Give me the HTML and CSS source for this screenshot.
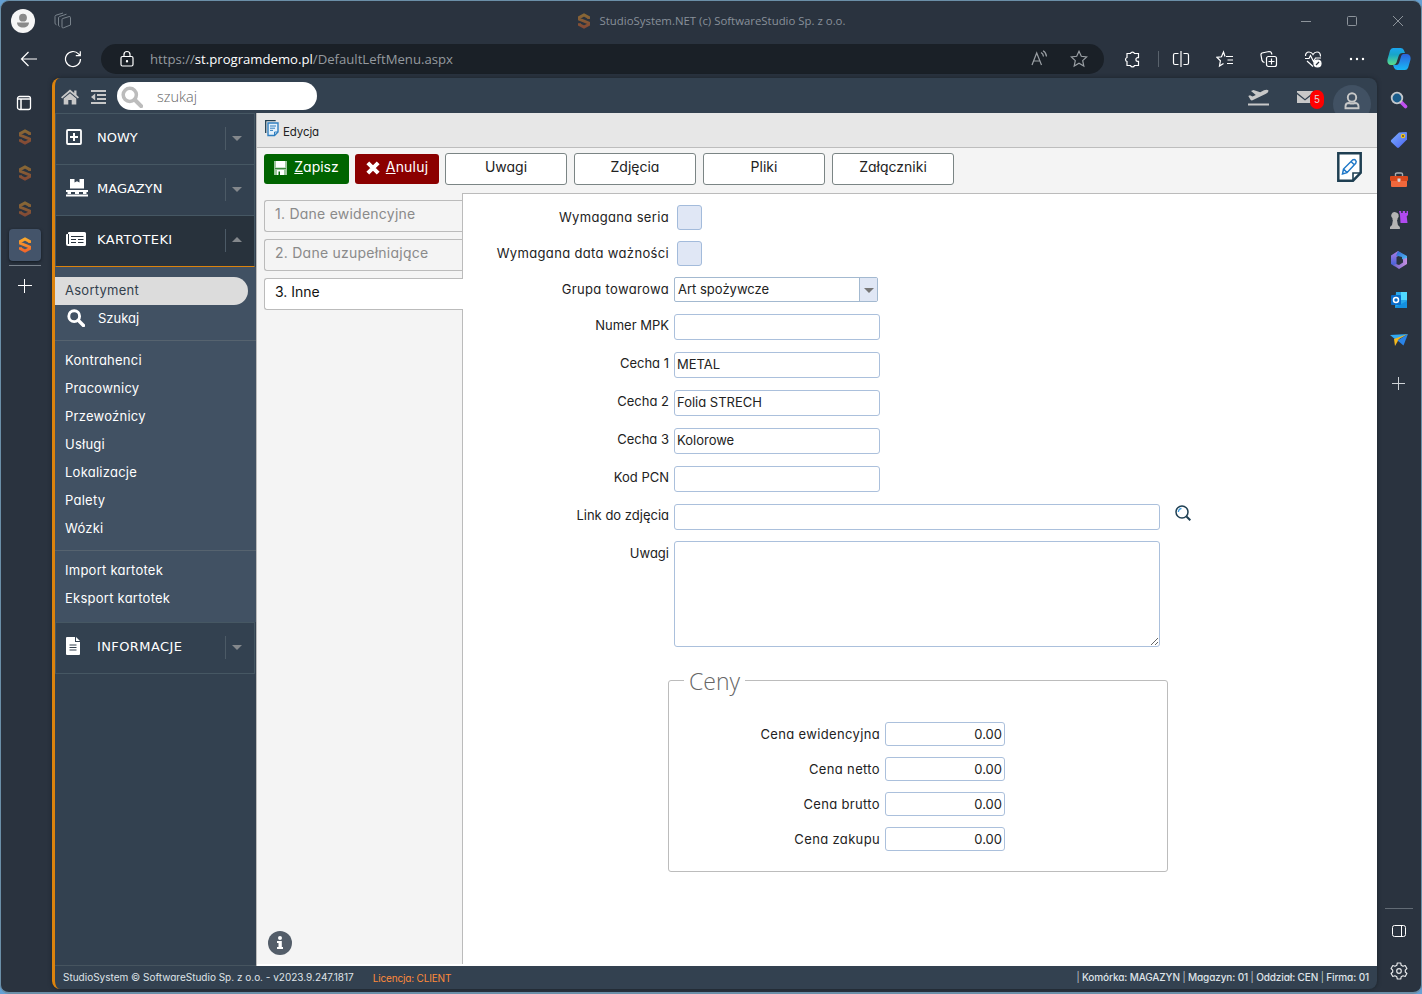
FILE: index.html
```html
<!DOCTYPE html>
<html lang="pl">
<head>
    <meta charset="UTF-8">
    <meta name="viewport" content="width=device-width, initial-scale=1.0">
    <title>StudioSystem.NET (c) SoftwareStudio Sp. z o.o.</title>
    <link rel="stylesheet" href="styles.css">
</head>
<body>
<svg class="defs">
    <defs>
        <linearGradient id="orange" x1="0" y1="0" x2="0" y2="1"><stop offset="0" stop-color="#f9a72b"/><stop offset="1" stop-color="#f2672a"/></linearGradient>
        <linearGradient id="copA" x1="0" y1="0" x2="0" y2="1"><stop offset="0" stop-color="#1aa5f0"/><stop offset=".4" stop-color="#18a5c8"/><stop offset="1" stop-color="#5be08a"/></linearGradient>
        <linearGradient id="copB" x1="0" y1="0" x2="0" y2="1"><stop offset="0" stop-color="#2c62dc"/><stop offset="1" stop-color="#18b8f6"/></linearGradient>
        <linearGradient id="tag" x1="0" y1="0" x2="1" y2="1"><stop offset="0" stop-color="#7db0ff"/><stop offset="1" stop-color="#4a62f0"/></linearGradient>
        <linearGradient id="mA" x1="0" y1="0" x2="0" y2="1"><stop offset="0" stop-color="#b07ce0"/><stop offset="1" stop-color="#3a5fd8"/></linearGradient>
        <linearGradient id="mB" x1="0" y1="0" x2="1" y2="1"><stop offset="0" stop-color="#2f5fd0"/><stop offset="1" stop-color="#55c8f8"/></linearGradient>
        <linearGradient id="mC" x1="0" y1="0" x2="1" y2="0"><stop offset="0" stop-color="#6a63c8"/><stop offset="1" stop-color="#c78fe0"/></linearGradient>
        <symbol id="logo" viewBox="0 0 12 16">
            <path d="M10.500 6V4.400L6 2 1.500 4.400V6.300L10.500 9.900V11.700L6 14.100 1.500 11.700V10.200" fill="none" stroke="url(#orange)" stroke-width="3"/>
        </symbol>
        <symbol id="search" viewBox="0 0 20 20">
            <circle cx="8" cy="8" r="6" fill="none" stroke="currentColor" stroke-width="3.2"/>
            <path d="M12.5 12.5L18.3 18.3" stroke="currentColor" stroke-width="3.8" stroke-linecap="round"/>
        </symbol>
    </defs>
</svg>
<div class="window">
    <div class="titlebar">
        <div class="title-left">
            <svg class="avatar" width="24" height="24" viewBox="0 0 24 24"><circle cx="12" cy="12" r="12" fill="#f6f6f6"/><circle cx="12" cy="8.7" r="3.9" fill="#8a8a8a"/><path d="M6 13.6h12c0 3-2.6 5-6 5s-6-2-6-5z" fill="#8a8a8a"/></svg>
            <svg width="18" height="18" viewBox="0 0 18 18" fill="none" stroke="#78828b"><path d="M8.5 6.6L15 4.6Q16.5 4.300 16.500 5.500V13L9.500 15.800Q8 16.200 8 15V8Q8 7 8.500 6.600z"/><path d="M5.600 14.500Q4.500 14 4.500 13V6Q4.500 5 5.500 4.500L12.500 2.200"/><path d="M2.500 12.800Q1 12.500 1 11V4.500Q1 3.500 2 3.200L9 1"/></svg>
        </div>
        <div class="title-text"><svg class="dim" width="12" height="16"><use href="#logo"/></svg>StudioSystem.NET (c) SoftwareStudio Sp. z o.o.</div>
        <div class="title-right">
            <span class="win-btn"><svg width="12" height="12" viewBox="0 0 12 12"><path d="M1 6.500h10"/></svg></span>
            <span class="win-btn"><svg width="12" height="12" viewBox="0 0 12 12"><rect x="1.500" y="1.500" width="9" height="9" rx="1"/></svg></span>
            <span class="win-btn"><svg width="12" height="12" viewBox="0 0 12 12"><path d="M1 1l10 10M11 1L1 11"/></svg></span>
        </div>
    </div>
    <div class="navbar">
        <span class="nav-btn"><svg width="18" height="18" viewBox="0 0 18 18"><path d="M17 9H1.500M8.500 2L1.500 9l7 7"/></svg></span>
        <span class="nav-btn"><svg width="18" height="18" viewBox="0 0 18 18"><path d="M16.500 9A7.500 7.500 0 1 1 14.500 3.900L16 5.500M16.300 1.200V5.600H11.800"/></svg></span>
        <div class="address">
            <svg width="14" height="18" viewBox="0 0 14 18"><rect x="1" y="6.500" width="12" height="9.500" rx="1.500"/><path d="M4 6.500V4.500a3 3 0 0 1 6 0v2"/><circle cx="7" cy="11.200" r=".6" fill="#fff"/></svg>
            <div class="url">https://<b>st.programdemo.pl</b>/DefaultLeftMenu.aspx</div>
            <svg class="grey" width="18" height="18" viewBox="0 0 18 18"><path d="M2 15L6.700 3 11.500 15M3.600 11h6.300M11 2.500q2.300 1.200 2.500 4M13 .8q3.200 1.700 3.500 5.700"/></svg>
            <svg class="grey" width="18" height="18" viewBox="0 0 18 18"><path d="M9 1.300l2.300 5 5.400.6-4 3.700 1.100 5.400L9 13.300 4.200 16l1.100-5.400-4-3.700 5.400-.6z"/></svg>
        </div>
        <span class="nav-btn"><svg width="18" height="18" viewBox="0 0 18 18"><path d="M4 3.500H7.500a2.100 2.100 0 0 1 4 0H15.500V7.600H14.800a1.900 1.900 0 0 0 0 3.800H15.500V15.500H11.500a2.100 2.100 0 0 1-4 0H4V11.500a2.100 2.100 0 0 1 0-4z"/></svg></span>
        <i class="nav-sep"></i>
        <span class="nav-btn"><svg width="18" height="18" viewBox="0 0 18 18"><path d="M9 1v16M6.500 3.500H3Q1.500 3.500 1.500 5v8Q1.500 14.500 3 14.500h3.500M11.500 3.500H15Q16.500 3.500 16.500 5v8Q16.500 14.500 15 14.500h-3.500"/></svg></span>
        <span class="nav-btn"><svg width="18" height="18" viewBox="0 0 18 18"><path d="M10 6.500H17M11.500 10H17M11 13.500H17M9 6.500L7.500 2 5.500 6.800 1 7.300 4.400 10.800 3.500 16 7.500 13.500"/></svg></span>
        <span class="nav-btn"><svg width="18" height="18" viewBox="0 0 18 18"><rect x="6.500" y="6.500" width="10" height="10" rx="2"/><path d="M11.500 8.500v6M8.500 11.500h6M4.500 12.500Q2.500 12 2 10.500L1 5Q.8 3.500 2 3L9 1.500Q10.800 1.500 11.200 2.500L12 4.500"/></svg></span>
        <span class="nav-btn"><svg width="18" height="18" viewBox="0 0 18 18"><path d="M1.500 6Q1.500 2 5 2 7.500 2 9 4.500 10.500 2 13 2 16.500 2 16.500 6.500M1 8.500h4L6.500 5.500 9.500 11.500 11.500 8h5.500M3 11l6 5.500"/><circle cx="13.500" cy="13.500" r="3.500" fill="#fff"/><path class="cut" d="M12 15l3-3"/></svg></span>
        <span class="nav-btn"><svg width="18" height="18" viewBox="0 0 18 18"><path class="dots" d="M3 9h0M9 9h0M15 9h0"/></svg></span>
        <span class="copilot"><svg width="24" height="24" viewBox="0 0 24 24"><path d="M6 1H13.500Q16 1 16.800 3L18 6H15Q12.500 6 11.800 8.500L9.500 15.500Q8.500 18 6 18H4Q-.5 17.500 .6 12L3 3.500Q3.800 1 6 1z" fill="url(#copA)"/><path d="M16.500 7H20Q24.500 8 23.400 13L21.200 20.500Q20.300 23 18 23H10.500Q8 23 7.200 21L6 18H9Q11.500 18 12.200 15.500L14.300 8.700Q15 7 16.500 7z" fill="url(#copB)"/></svg></span>
    </div>
    <div class="workspace">
        <div class="tabs-strip">
            <span class="strip-first"><svg width="16" height="16" viewBox="0 0 16 16" fill="none" stroke="#fff" stroke-width="1.300"><rect x="1.500" y="1.500" width="13" height="13" rx="2"/><path d="M2 4h12M5 4v10" stroke-width="1.500"/></svg></span>
            <span class="strip-tab"><svg class="dim" width="12" height="16"><use href="#logo"/></svg></span>
            <span class="strip-tab"><svg class="dim" width="12" height="16"><use href="#logo"/></svg></span>
            <span class="strip-tab"><svg class="dim" width="12" height="16"><use href="#logo"/></svg></span>
            <span class="strip-tab active"><svg width="12" height="16"><use href="#logo"/></svg></span>
            <i class="strip-line"></i>
            <svg width="14" height="14" viewBox="0 0 14 14" stroke="#fff"><path d="M6.500 0v14M0 6.500h14"/></svg>
        </div>

        <div class="app">
            <div class="app-header">
                <svg class="home" width="18" height="16" viewBox="0 0 18 16" fill="#c8c8c8"><path d="M9 .5L0 8.200l1.200 1.300L9 3l7.800 6.500L18 8.200 15.500 6V1.500h-2.300v2.600z"/><path d="M9 4.200L2.700 9.400V15.500H7.300V11h3.400v4.500h4.600V9.400z"/></svg>
                <svg class="outdent" width="15" height="14" viewBox="0 0 15 14" fill="#c8c8c8"><path d="M0 0h15v2H0zM6 4h9v2H6zM6 8h9v2H6zM0 12h15v2H0zM0 7l4.200-3.400v6.800z"/></svg>
                <div class="search-box"><svg width="22" height="22"><use href="#search"/></svg><span>szukaj</span></div>
                <svg class="plane" width="21" height="17" viewBox="0 0 21 17" fill="#c8c8c8"><path d="M0 14.600h21v2H0zM.3 7L2 6.300l2.500 1.300 3.300-1.700L3 2 5.500.9l6.700 2.300L16 1.200q3-1.200 4.500.2.300 1.800-2.500 3.400L4.500 11.300q-1.200.4-2-.5z"/></svg>
                <div class="mail"><svg width="16" height="12" viewBox="0 0 16 12" fill="#c8c8c8"><path d="M0 0h16v1.500L8 8 0 1.500zM0 3.200L8 9.600l8-6.400V12H0z"/></svg><span class="badge">5</span></div>
                <div class="user"><svg width="16" height="18" viewBox="0 0 16 18" fill="none" stroke="#c8c8c8" stroke-width="1.900"><circle cx="8" cy="5.500" r="4.200"/><path d="M1.500 16.300v-2q0-3.300 3.500-3.300 3 1.200 6 0 3.500 0 3.500 3.300v2z"/></svg></div>
            </div>

            <div class="app-body">
                <div class="menu">
                    <div class="menu-head"><svg width="16" height="16" viewBox="0 0 16 16" fill="none" stroke="#fff"><rect x="1" y="1" width="14" height="14" rx="1" stroke-width="1.800"/><path d="M8 4v8M4 8h8" stroke-width="2"/></svg><span>NOWY</span><i class="arrow"></i></div>
                    <div class="menu-head"><svg width="22" height="18" viewBox="0 0 22 18" fill="#fff"><path d="M4 0h4.500v3.500L11 2.300l2.500 1.200V0H18v9.500H4zM0 11h22v2H0zM1.500 13h3.500v2H1.500zM9 13h4v2H9zM17 13h3.500v2H17zM0 15.500h22v2H0z"/></svg><span>MAGAZYN</span><i class="arrow"></i></div>
                    <div class="menu-head open wider"><svg width="20" height="14" viewBox="0 0 20 14"><path d="M3 0h15.500Q20 0 20 1.500v11Q20 14 18.500 14H2Q0 14 0 12V3Q0 2 1 2h1V1Q2 0 3 0z" fill="#fff"/><path d="M2.500 2v10M5 4.500h12.500M5 7.500h5M5 10.500h5M12 7.500h5.500M12 10.500h5.500" stroke="#28323c" stroke-width="1"/></svg><span>KARTOTEKI</span><i class="arrow"></i></div>
                    <div class="submenu">
                        <a class="selected">Asortyment</a>
                        <a class="with-icon"><svg width="18" height="18"><use href="#search"/></svg>Szukaj</a>
                        <hr>
                        <a>Kontrahenci</a>
                        <a>Pracownicy</a>
                        <a>Przewoźnicy</a>
                        <a>Usługi</a>
                        <a>Lokalizacje</a>
                        <a>Palety</a>
                        <a>Wózki</a>
                        <hr>
                        <a>Import kartotek</a>
                        <a>Eksport kartotek</a>
                    </div>
                    <div class="menu-head last wider"><svg width="14" height="18" viewBox="0 0 14 18"><path d="M1 0h8v5h5v12q0 1-1 1H1q-1 0-1-1V1Q0 0 1 0zM10 0l4 4h-4z" fill="#fff"/><path d="M3.500 8h7M3.500 10.500h7M3.500 13h7" stroke="#33414f"/></svg><span>INFORMACJE</span><i class="arrow"></i></div>
                </div>

                <div class="content">
                    <div class="page-title">
                        <svg width="14" height="17" viewBox="0 0 14 17" fill="none"><path d="M.7 13V.7h10" stroke="#1f3f52" stroke-width="1.300"/><path d="M3 3h10v9l-3.500 3.500H3z" stroke="#2f7fc0" stroke-width="1.400" fill="#e4f1fb"/><path d="M13 12h-3.500v3.500M5 6h6M5 8.200h5M5 10.400h3" stroke="#2f7fc0"/></svg>
                        <span>Edycja</span>
                    </div>
                    <div class="toolbar">
                        <a class="btn green"><svg width="13" height="14" viewBox="0 0 13 14"><path d="M0 0h13v14H0z" fill="#9fc79f"/><path d="M2 0h9v6.500H2zM3 9h7v5H3z" fill="#fff"/><path d="M4.500 10.500h1.500V14H4.500z" fill="#006400"/><path d="M1 7.500h11" stroke="#3c8a3c"/></svg><span><u>Z</u>apisz</span></a>
                        <a class="btn red"><svg width="14" height="14" viewBox="0 0 14 14"><path d="M1.800 1.800l10.400 10.400M12.200 1.800L1.800 12.200" stroke="#fff" stroke-width="4"/></svg><span><u>A</u>nuluj</span></a>
                        <a class="btn">Uwagi</a>
                        <a class="btn">Zdjęcia</a>
                        <a class="btn">Pliki</a>
                        <a class="btn">Załączniki</a>
                        <svg class="edit" width="25" height="30" viewBox="0 0 25 30" fill="none"><path d="M1.300 1.300h22.400v19.500L16 28.700H1.300z" stroke="#1f3f52" stroke-width="2.500" fill="#fff"/><path d="M23 21h-7v7" stroke="#1f3f52" stroke-width="1.600"/><path d="M5.500 22l1-5L15.500 8q2-1 3 .3 1.300 1.200.2 3L10 20.700zM14 9.500l3.300 3.300M6.500 17l3.500 3.600" stroke="#1f78c8" stroke-width="1.500"/></svg>
                    </div>
                    <div class="panes">
                        <div class="side-tabs">
                            <div class="side-tab">1. Dane ewidencyjne</div>
                            <div class="side-tab">2. Dane uzupełniające</div>
                            <div class="side-tab current">3. Inne</div>
                            <svg class="info" width="24" height="24" viewBox="0 0 24 24"><circle cx="12" cy="12" r="12" fill="#535d69"/><circle cx="12" cy="7" r="2" fill="#fff"/><path d="M9 10h4.800v6H15v2H9v-2h1.500v-4H9z" fill="#fff"/></svg>
                        </div>
                        <form class="form">
                            <div class="row"><label>Wymagana seria</label><span class="check"></span></div>
                            <div class="row"><label>Wymagana data ważności</label><span class="check"></span></div>
                            <div class="row"><label>Grupa towarowa</label><div class="select"><span>Art spożywcze</span><i></i></div></div>
                            <div class="row text"><label>Numer MPK</label><input type="text"></div>
                            <div class="row text"><label>Cecha 1</label><input type="text" value="METAL"></div>
                            <div class="row text"><label>Cecha 2</label><input type="text" value="Folia STRECH"></div>
                            <div class="row text"><label>Cecha 3</label><input type="text" value="Kolorowe"></div>
                            <div class="row text"><label>Kod PCN</label><input type="text"></div>
                            <div class="row text"><label>Link do zdjęcia</label><input class="long" type="text"><svg class="lens" width="16" height="16" viewBox="0 0 16 16" fill="none"><circle cx="7" cy="7" r="6" stroke="#1f3f52" stroke-width="1.500"/><path d="M11.500 11.500L15.300 15.300" stroke="#1f3f52" stroke-width="2"/><path d="M3.300 7Q3.500 4 6.500 3.300" stroke="#3a9be0" stroke-width="1.300"/></svg></div>
                            <div class="row area"><label>Uwagi</label><textarea></textarea></div>
                            <fieldset>
                                <legend>Ceny</legend>
                                <div class="price"><label>Cena ewidencyjna</label><input type="text" value="0.00"></div>
                                <div class="price"><label>Cena netto</label><input type="text" value="0.00"></div>
                                <div class="price"><label>Cena brutto</label><input type="text" value="0.00"></div>
                                <div class="price"><label>Cena zakupu</label><input type="text" value="0.00"></div>
                            </fieldset>
                        </form>
                    </div>
                </div>
            </div>

            <div class="app-footer">
                <span class="version">StudioSystem © SoftwareStudio Sp. z o.o. - v2023.9.247.1817</span>
                <span class="licence">Licencja: CLIENT</span>
                <span class="unit"><i>|</i> Komórka: MAGAZYN <i>|</i> Magazyn: 01 <i>|</i> Oddział: CEN <i>|</i> Firma: 01</span>
            </div>
        </div>

        <div class="edge-bar">
            <span><svg width="18" height="18" viewBox="0 0 18 18"><path d="M11.500 11.500l4 4" stroke="#c050f0" stroke-width="3.600" stroke-linecap="round"/><circle cx="7" cy="7" r="5.300" fill="#1a5d8c" stroke="#c4c8cc" stroke-width="1.800"/></svg></span>
            <span><svg width="18" height="18" viewBox="0 0 18 18"><path d="M9 1.500L16 1q1 0 1 1v6.500L9 16.500q-1 .8-2 0L1.200 11q-.8-1 0-2z" fill="url(#tag)"/><circle cx="13" cy="5" r="1.700" fill="#6a5a20" stroke="#f0c020" stroke-width="1.200"/></svg></span>
            <span><svg width="18" height="16" viewBox="0 0 18 16"><path d="M5.500 4V2Q5.500 1 7 1h4q1.500 0 1.500 1v2" fill="none" stroke="#a9adb2" stroke-width="1.400"/><rect y="4" width="18" height="5" rx="1" fill="#d9481c"/><path d="M1 9h16v5q0 1-1 1H2q-1 0-1-1z" fill="#f0683c"/><path d="M7.500 6.500h3V9q-1.500 2-3 0z" fill="#d8dadc"/></svg></span>
            <span><svg width="20" height="20" viewBox="0 0 20 20"><path d="M10 1h2.200v2h1.500V1h2.400v2h1.500V1H19v4l-1.300 1.300.8 6.700H11.500L11 5z" fill="#b04af0"/><path d="M6.500 2.200a3.400 3.400 0 0 1 2 6L9 9.500H7.900l1 5.500 2 2v2H1v-2l2-2 1-5.500H3l.6-1.300a3.400 3.400 0 0 1 2.900-6z" fill="#b4b4b4"/></svg></span>
            <span><svg width="18" height="18" viewBox="0 0 18 18"><path d="M8 0L1 4.500V13l4 2.500 1.500-1V6L12 3z" fill="url(#mA)"/><path d="M8 0l9 5v5.500L12 8V6L6 4.500z" fill="url(#mB)"/><path d="M17 7v6L9 18 3 14l3-1 3 1 4-2.500V8z" fill="url(#mC)"/></svg></span>
            <span><svg width="18" height="18" viewBox="0 0 18 18"><path d="M6 1h10q1 0 1 1v14q0 1-1 1H5z" fill="#28a8ea"/><path d="M11 1h6v8h-6z" fill="#50d9ff"/><path d="M5 16l12-6v6q0 1-1 1H5z" fill="#1490df"/><rect x="1" y="4" width="10" height="10" rx="1" fill="#0a6cc8"/><circle cx="6" cy="9" r="2.500" fill="none" stroke="#fff" stroke-width="1.500"/></svg></span>
            <span><svg width="18" height="14" viewBox="0 0 18 14"><path d="M0 2l18-1L6 7z" fill="#32a8f0"/><path d="M18 1L9 6 5 13 4 6z" fill="#f4b81c"/><path d="M18 1l-4.500 11.500L7.500 7.500z" fill="#2a84e8"/></svg></span>
            <svg class="plus" width="13" height="13" viewBox="0 0 13 13" stroke="#cfd3d7"><path d="M6.500 0v13M0 6.500h13"/></svg>
            <i class="edge-line"></i>
            <svg width="16" height="14" viewBox="0 0 16 14" fill="none" stroke="#fff"><rect x="1.500" y="1.500" width="13" height="11" rx="2"/><path d="M10.500 1.500v11"/></svg>
            <svg class="gear" width="18" height="18" viewBox="0 0 18 18" fill="none" stroke="#e4e6e8" stroke-width="1.200"><circle cx="9" cy="9" r="2.300"/><path d="M7.300 1h3.400l.5 2.300 1.800 1 2.200-.8 1.700 3-1.600 1.600v1.900l1.600 1.500-1.700 3-2.200-.7-1.800 1-.5 2.200H7.300l-.5-2.200-1.800-1-2.200.7-1.700-3L2.700 10V8.100L1.100 6.500l1.700-3 2.200.8 1.800-1z" stroke-linejoin="round"/></svg>
        </div>
    </div>
</div>
</body>
</html>
```
FILE: styles.css
```css
* { box-sizing: border-box; }
body { margin: 0; background-color: #64a0d4; font-family: Inter, Poppins, sans-serif; font-feature-settings: "cv11"; }
svg { display: block; flex: none; }
.defs { position: absolute; width: 0; height: 0; }

/* Okno przeglądarki */
.window { height: 994px; border: 1px solid #6b8fa8; border-bottom-width: 2px; border-radius: 9px; background-color: #2a333f; overflow: hidden; display: flex; flex-direction: column; }
.titlebar { height: 39px; display: grid; grid-template-columns: 1fr auto 1fr; align-items: center; font-family: "Open Sans", sans-serif; font-size: 11.4px; color: #88909a; }
.title-left { display: flex; align-items: center; gap: 19px; padding-left: 10px; }
.title-text { display: flex; align-items: center; gap: 10px; padding-left: 1px; }
.title-right { display: flex; justify-content: flex-end; }
.win-btn { width: 46px; display: flex; justify-content: center; fill: none; stroke: #8d949b; }
.dim { opacity: .45; }
.navbar { height: 38px; display: flex; align-items: center; padding-left: 6px; fill: none; stroke: #fff; stroke-width: 1.2; }
.nav-btn { width: 44px; display: flex; justify-content: center; }
.nav-sep { width: 1px; height: 16px; margin: 0 0 0 4px; background-color: #59626c; }
.nav-btn .cut { stroke: #2a333f; }
.nav-btn .dots { stroke-width: 2.4; stroke-linecap: round; }
.copilot { width: 42px; display: flex; justify-content: center; padding-right: 2px; stroke: none; }
.address { flex: 1; height: 30px; margin: 0 6px; padding: 0 16px 0 19px; border-radius: 15px; background-color: #1a2027; display: flex; align-items: center; gap: 16px; }
.address .grey { stroke: #9a9fa4; margin-left: 6px; }
.url { flex: 1; font-family: "Open Sans", sans-serif; font-size: 13.15px; color: #959a9f; }
.url b { font-weight: normal; color: #fff; }
.workspace { flex: 1; display: flex; min-height: 0; }

/* Karty pionowe */
.tabs-strip { width: 51px; padding: 9px 3px 0 0; display: flex; flex-direction: column; align-items: center; }
.strip-first { height: 32px; padding-right: 2px; display: flex; align-items: center; }
.strip-tab { width: 32px; height: 32px; margin: 2px 0; display: flex; align-items: center; justify-content: center; border-radius: 4px; }
.strip-tab.active { background-color: #44546a; box-shadow: 0 1px 3px #111820; }
.strip-line { width: 32px; height: 1px; margin: 2px 0 13px; background-color: #78818b; }

/* Aplikacja */
.app { width: 1325px; height: 911px; border-left: 3px solid #dc830d; border-radius: 8px; background-color: #334150; overflow: hidden; display: flex; flex-direction: column; box-shadow: 0 0 4px #1c232b; }
.app-header { height: 35px; display: flex; align-items: center; padding: 1px 6px 0 6px; }
.home, .plane { margin-top: 2px; }
.outdent { margin: 2px 0 0 12px; }
.search-box { width: 200px; height: 28px; margin-left: 11px; padding: 1px 0 0 4px; border-radius: 14px; background-color: #fff; color: #bcbcbc; display: flex; align-items: center; gap: 14px; }
.search-box span { font-family: "Open Sans", sans-serif; font-weight: 300; font-size: 14.5px; color: #666; padding-bottom: 1px; }
.plane { margin-left: auto; margin-right: 28px; }
.mail { position: relative; width: 36px; height: 12px; margin-top: 1px; }
.badge { position: absolute; left: 13px; top: -1px; width: 14px; height: 19px; border-radius: 8px; background-color: #f00; color: #ddd; font: 10px/19px "Liberation Sans", sans-serif; text-align: center; }
.user { width: 38px; height: 38px; border-radius: 50%; background-color: #415163; display: flex; align-items: center; justify-content: center; align-self: flex-start; margin-top: 6px; padding-bottom: 6px; flex: none; }
.app-body { flex: 1; display: flex; min-height: 0; }
.menu { width: 201px; border-bottom: 1px solid #46545f; }
.menu-head { height: 51px; width: 200px; border: 1px solid #465763; border-bottom: 0; display: grid; grid-template-columns: 31px 128px auto; align-items: center; padding: 0 12px 4px 10px; font-family: Verdana, "DejaVu Sans", sans-serif; font-size: 13px; color: #fff; }
.menu-head.wider span { letter-spacing: .4px; }
.menu-head .arrow { border-left: 1px solid #4c5a66; height: 23px; width: 17px; margin-top: 2px; display: flex; align-items: center; padding-left: 6px; }
.menu-head .arrow::after { content: ""; border: 5px solid transparent; border-top-color: #84888c; border-bottom: 0; }
.menu-head.open { height: 52px; background-color: #28323c; border-bottom: 1px solid #dc830d; }
.menu-head.open .arrow::after { border: 5px solid transparent; border-bottom-color: #84888c; border-top: 0; margin-top: -2px; }
.menu-head.last { height: 52px; border-bottom: 1px solid #465763; }
.submenu { height: 355px; padding-top: 10px; background-color: #415163; }
.submenu a { display: flex; align-items: center; height: 28px; padding: 0 0 2px 10px; font-size: 13px; letter-spacing: .25px; color: #fff; }
.submenu .selected { width: 193px; background-color: #dcdcdc; color: #333f4c; border-radius: 0 14px 14px 0; }
.submenu .with-icon { padding-left: 12px; gap: 13px; letter-spacing: 0; }
.submenu hr { border: 0; height: 1px; background-color: #56636f; margin: 7px 0 6px; }

/* Treść */
.content { flex: 1; border-left: 1px solid #bbb; background-color: #f4f4f4; display: flex; flex-direction: column; }
.page-title { height: 35px; padding: 0 0 2px 8px; background-color: #e7e7e7; border-bottom: 1px solid #bdbdbd; display: flex; align-items: center; gap: 4px; font-size: 11.5px; color: #222; }
.page-title svg { margin-top: -2px; }
.page-title span { padding-top: 5px; letter-spacing: -.1px; }
.toolbar { height: 45px; padding: 5px 15px 0 7px; display: flex; gap: 7px; }
.btn { width: 122px; height: 32px; border: 1px solid #7b8585; border-radius: 3px; background-color: #fff; color: #222; font-size: 14px; display: flex; align-items: center; justify-content: center; padding-bottom: 5px; }
.btn.green, .btn.red { height: 30px; margin-top: 1px; border: 0; color: #fff; gap: 7px; }
.btn.green { width: 85px; background-color: #006400; margin-right: -1px; }
.btn.red { width: 84px; background-color: #8b0000; margin-right: -1px; gap: 6px; }
.btn.red span { letter-spacing: .2px; }
.btn svg { margin-top: 3px; }
.edit { margin-left: auto; margin-top: -1px; }
.panes { flex: 1; display: flex; background-color: #fff; }
.side-tabs { width: 206px; margin-bottom: 2px; padding: 7px 0 0 7px; background-color: #f4f4f4; border-right: 1px solid #bbb; display: flex; flex-direction: column; gap: 7px; }
.side-tab { height: 32px; padding: 0 0 5px 10px; border: 1px solid #bbb; border-right: 0; border-radius: 3px 0 0 3px; font-size: 14px; letter-spacing: .24px; color: #8a8a8a; display: flex; align-items: center; }
.side-tab.current { margin-right: -1px; background-color: #fff; color: #111; letter-spacing: 0; }
.info { margin: auto 0 9px 4px; }
.form { flex: 1; border-top: 1px solid #bbb; padding-top: 11px; }
.row { display: flex; align-items: center; height: 25px; margin-bottom: 11px; }
.row label { width: 206px; margin-right: 5px; padding-bottom: 1px; text-align: right; font-size: 13px; letter-spacing: .34px; color: #222; flex: none; }
.row.text { height: 26px; margin: 12px 0; }
.row.text label { padding-bottom: 4px; letter-spacing: 0; }
.row.area { height: 106px; margin: -1px 0 0; align-items: flex-start; }
.row.area label { padding-top: 4px; letter-spacing: 0; }
.check { width: 25px; height: 25px; margin-left: 3px; border: 1px solid #a3bbdb; border-radius: 3px; background-color: #e0e7f5; }
.select { width: 204px; height: 25px; border: 1px solid #a3b9d0; border-radius: 2px; display: flex; font-size: 13px; line-height: 23px; color: #222; padding-left: 3px; }
.select span { flex: 1; }
.select i { width: 18px; background-color: #e0e7f5; border-left: 1px solid #a3b9d0; display: flex; align-items: center; justify-content: center; }
.select i::after { content: ""; border: 5px solid transparent; border-top-color: #777; border-bottom: 0; margin-top: 2px; }
input[type="text"], textarea { font-family: inherit; font-feature-settings: inherit; font-size: 13px; color: #222; padding: 0 2px 2px; border: 1px solid #abc0dc; border-radius: 3px; background-color: #fff; }
.row input { width: 206px; height: 26px; }
.row input.long { width: 486px; }
.lens { margin: -9px 0 0 15px; }
textarea { width: 486px; height: 106px; }
fieldset { width: 500px; height: 208px; margin: 17px 0 0 205px; padding: 26px 0 0; border: 1px solid #bcbcbc; border-radius: 3px; }
legend { height: 32px; margin-left: 15px; padding: 0 5px; font-family: "Open Sans", sans-serif; font-weight: 300; font-size: 23px; line-height: 35px; color: #666; }
.price { height: 24px; margin-bottom: 11px; display: flex; align-items: center; }
.price label { width: 211px; margin-right: 5px; text-align: right; font-size: 13px; letter-spacing: .35px; color: #222; }
.price input[type="text"] { width: 120px; height: 24px; text-align: right; padding-bottom: 0; }

.app-footer { height: 23px; padding: 0 8px 1px; display: flex; align-items: center; font-size: 10px; color: #dfe3e8; }
.licence { margin-left: 19px; color: #ff8a3a; padding-top: 2px; letter-spacing: -.17px; }
.unit { margin-left: auto; font-weight: 500; letter-spacing: -.12px; }
.unit i { font-style: normal; font-weight: 300; }

/* Pasek boczny przeglądarki */
.edge-bar { flex: 1; padding: 2px 1px 0 0; display: flex; flex-direction: column; align-items: center; }
.edge-bar span { height: 40px; display: flex; align-items: center; }
.plus { margin-top: 17px; }
.edge-line { width: 28px; height: 1px; margin: auto 0 15px; background-color: #626b75; }
.gear { margin: 24px 0 12px; }
```
